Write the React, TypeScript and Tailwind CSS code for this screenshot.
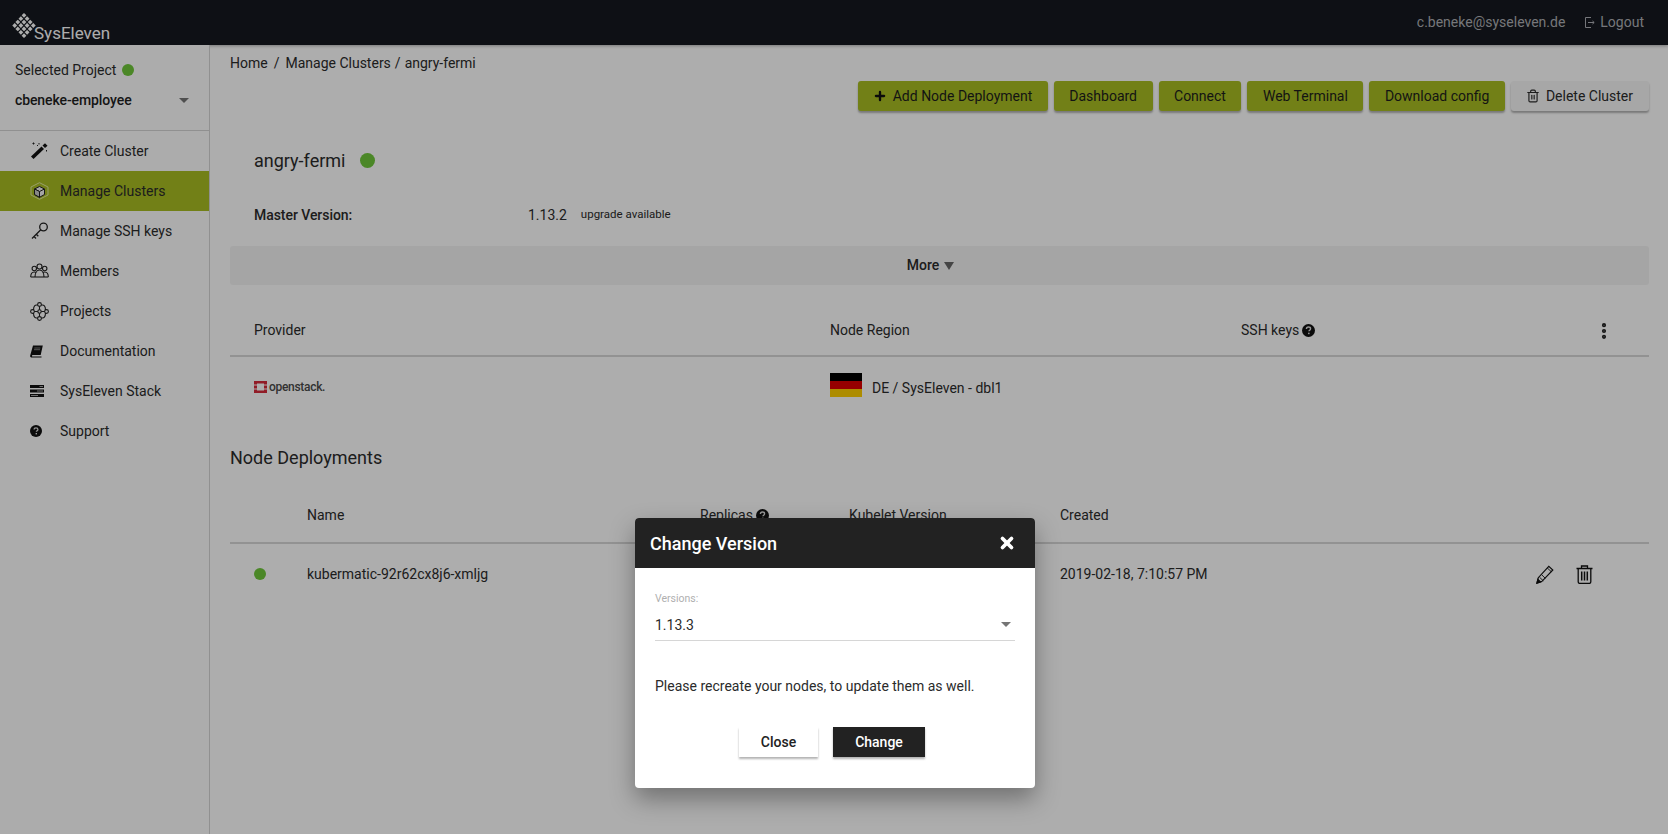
import React from "react";
import { Plus, Trash2, X, EllipsisVertical } from "lucide-react";

const Logo = () => {
  const cells: [number, number][] = [];
  for (let i = 0; i < 4; i++) for (let j = 0; j < 4; j++) cells.push([i, j]);
  return (
    <svg width="24" height="27" viewBox="0 0 24 27" className="shrink-0">
      {cells.map(([i, j]) => {
        const cx = 12 + (i - j) * 3.1;
        const cy = 13.5 + (i + j - 3) * 3.4;
        return <rect key={`${i}-${j}`} x={cx - 1.7} y={cy - 1.7} width="3.4" height="3.4" fill="#fff" transform={`rotate(45 ${cx} ${cy})`} />;
      })}
    </svg>
  );
};

const Wand = () => (
  <svg width="19" height="18" viewBox="0 0 19 18">
    <path d="M1 14.5 11.500 4.500l2.500 2.500L3.500 17z" fill="#111" />
    <path d="M12.500 3.500 15 1.200 17.500 3.700 15 6z" fill="#111" />
    <path d="M2.500 1.500h2M3.500.5v2M9 1v1.500M16.500 8v1.500M7 3.500h1" stroke="#222" strokeWidth="1" />
  </svg>
);
const Cube = () => (
  <svg width="19" height="18" viewBox="0 0 19 18" fill="none" strokeWidth="1">
    <path d="M9.500.7l8.500 4.300v8L9.500 17.300 1 13V5z" stroke="#e2ec9c" />
    <path d="M9.500 4.500l5 2.500v5.500l-5 2.800-5-2.800V7z" fill="#f4f4f4" stroke="#222" />
    <path d="M4.500 7l5 2.500 5-2.500M9.500 9.500v5.800" stroke="#222" />
    <path d="M4.500 7l5 2.500v5.800l-5-2.800z" fill="#c9c9c9" stroke="#222" />
  </svg>
);
const Key = () => (
  <svg width="19" height="18" viewBox="0 0 19 18" fill="none" stroke="#222" strokeWidth="1.300">
    <circle cx="13.500" cy="5" r="3.800" />
    <path d="M10.800 7.800 2 16.500M4 14.500l2 2M6.300 12.200l2 2" />
  </svg>
);
const People = () => (
  <svg width="19" height="18" viewBox="0 0 19 18" fill="none" stroke="#222" strokeWidth="1.100">
    <circle cx="9.500" cy="4.500" r="2.500" />
    <circle cx="4.300" cy="6.500" r="2.200" />
    <circle cx="14.700" cy="6.500" r="2.200" />
    <path d="M.7 15c0-3.200 1.200-5 3.600-5 1 0 1.800.3 2.300.9M18.300 15c0-3.200-1.200-5-3.600-5-1 0-1.800.3-2.300.9M5 15c0-4 1.800-7 4.500-7s4.500 3 4.500 7" />
    <path d="M.7 15h17.600" />
  </svg>
);
const Nodes = () => (
  <svg width="19" height="19" viewBox="0 0 19 19" fill="none" stroke="#222" strokeWidth="1.100">
    <circle cx="9.500" cy="2.500" r="1.900" />
    <circle cx="9.500" cy="16.500" r="1.900" />
    <circle cx="2.500" cy="9.500" r="1.900" />
    <circle cx="16.500" cy="9.500" r="1.900" />
    <circle cx="9.500" cy="9.500" r="1.700" />
    <path d="M9.500 4.400v3.400M9.500 11.200v3.400M4.400 9.500h3.400M11.200 9.500h3.400" />
    <path d="M7.700 3.200C5 2.500 3.500 4.200 3.500 7.900M11.300 3.200c2.700-.7 4.200 1 4.200 4.700M7.700 15.800c-2.700.7-4.200-1-4.200-4.700M11.300 15.800c2.700.7 4.200-1 4.200-4.700" />
  </svg>
);
const Book = () => (
  <svg width="13" height="13" viewBox="0 0 13 13" fill="#111">
    <path d="M3 .5h9.800L10.700 10H2.800c-.9 0-1.100 1-.6 1.400h9.300v1.100H1.300C.4 12.500-.1 11.500.2 10.500z" />
    <path d="M4.300 3h6M4 4.700h6" stroke="#aaa" strokeWidth=".7" />
  </svg>
);
const Stack = () => (
  <svg width="14" height="12" viewBox="0 0 14 12" fill="#111">
    <path d="M0 0h14v3H0zM0 4.500h14v3H0zM0 9h14v3H0z" />
    <path d="M9.500 1.500h3.500M7 6h6M1 10.500h7" stroke="#c8c8c8" strokeWidth=".8" />
  </svg>
);
const Help = ({ s = 12 }: { s?: number }) => (
  <svg width={s} height={s} viewBox="0 0 12 12">
    <circle cx="6" cy="6" r="6" fill="#111" />
    <path d="M4.100 4.600c0-1.200.9-1.800 1.900-1.800s1.900.6 1.900 1.600c0 1.300-1.500 1.300-1.500 2.400" fill="none" stroke="#ddd" strokeWidth="1.300" />
    <rect x="5.600" y="8" width="1.400" height="1.400" fill="#ddd" />
  </svg>
);
const PencilIcon = () => (
  <svg width="18" height="19" viewBox="0 0 18 19" fill="none" stroke="#111" strokeWidth="1.200">
    <path d="M1 18l1.300-5.300L12.800 1.300l4 3.700L6 16.300z" />
    <path d="M3.600 12.300l3.700 3.500M5.700 9.800l3.600 3.500M11.300 3l3.900 3.600" strokeWidth="0.900" />
    <path d="M1 18l.9-3.600 2.700 2.500z" fill="#111" />
  </svg>
);
const TrashIcon = () => (
  <svg width="17" height="19" viewBox="0 0 17 19" fill="none" stroke="#111" strokeWidth="1.300">
    <path d="M.5 3.500h16M5.500 3.500V1h6v2.500" />
    <path d="M2.200 3.500v13.300c0 1 .6 1.600 1.500 1.600h9.600c.9 0 1.500-.6 1.500-1.600V3.500" />
    <path d="M5.700 6.500v9M8.500 6.500v9M11.300 6.500v9" strokeWidth="1.500" />
  </svg>
);

const NAV: { label: string; icon: React.ReactNode; active?: boolean }[] = [
  { label: "Create Cluster", icon: <Wand /> },
  { label: "Manage Clusters", icon: <Cube />, active: true },
  { label: "Manage SSH keys", icon: <Key /> },
  { label: "Members", icon: <People /> },
  { label: "Projects", icon: <Nodes /> },
  { label: "Documentation", icon: <Book /> },
  { label: "SysEleven Stack", icon: <Stack /> },
  { label: "Support", icon: <Help /> },
];

const GreenBtn = ({ children }: { children: React.ReactNode }) => (
  <button className="h-[30px] px-[15.5px] rounded-[3px] bg-[#a8bd22] text-[14px] text-[#1d1d1d] flex items-center shadow-[0_2px_2px_rgba(0,0,0,0.3)] whitespace-nowrap">
    {children}
  </button>
);

export default function App() {
  return (
    <div className="relative h-[834px] w-[1668px] overflow-hidden bg-white font-['Roboto',sans-serif] text-[14px] text-[#2b2b2b]">
      <header className="h-[45px] bg-[#16191f] flex justify-between pr-[24px] shadow-[0_1px_3px_rgba(0,0,0,0.3)]">
        <div className="flex items-start pl-[12px] pt-[12px]">
          <Logo />
          <span className="text-white text-[17px] leading-[20px] ml-[-2px] mt-[11px]">SysEleven</span>
        </div>
        <div className="flex items-center gap-[20px] text-[14px] text-[#aeb0b5]">
          <span>c.beneke@syseleven.de</span>
          <span className="flex items-center gap-[5px]">
            <svg width="10" height="11" viewBox="0 0 10 11" fill="none" stroke="#aeb0b5" strokeWidth="1">
              <path d="M6 .5H.5v10H6M3 5.500h6M7.500 4l1.700 1.500L7.500 7" />
            </svg>
            Logout
          </span>
        </div>
      </header>

      <div className="flex h-[789px]">
        <aside className="w-[210px] shrink-0 bg-[#fefefe] border-r border-[#d4d4d4] flex flex-col">
          <div className="h-[86px] border-b border-[#d4d4d4] px-[15px] pt-[17px]">
            <div className="flex items-center gap-[6px] h-[16px] text-[14px]">
              Selected Project
              <span className="w-[12px] h-[12px] rounded-full bg-[#6fc73a]" />
            </div>
            <div className="flex items-center justify-between mt-[12px] pr-[5px] font-medium text-[14px] tracking-[-0.1px] text-[#1f1f1f]">
              cbeneke-employee
              <span className="w-0 h-0 border-l-[5px] border-r-[5px] border-t-[5px] border-l-transparent border-r-transparent border-t-[#757575]" />
            </div>
          </div>
          <nav>
            {NAV.map((n) => (
              <div key={n.label} className={`h-[40px] flex items-center ${n.active ? "bg-[#a8bd22]" : ""}`}>
                <span className="w-[60px] pl-[30px] flex items-center shrink-0">{n.icon}</span>
                {n.label}
              </div>
            ))}
          </nav>
        </aside>

        <main className="flex-1 pl-[20px] pr-[19px] min-w-0">
          <div className="h-[36px] flex items-center">
            <span>Home</span>
            <span className="ml-[6px]">/</span>
            <span className="ml-[6px]">Manage Clusters</span>
            <span className="ml-[4px]">/</span>
            <span className="ml-[4px]">angry-fermi</span>
          </div>
          <div className="flex justify-end gap-[6px]">
            <GreenBtn><Plus size={14} strokeWidth={4} className="mr-[6px] ml-[-1px] text-[#111]" />Add Node Deployment</GreenBtn>
            <GreenBtn>Dashboard</GreenBtn>
            <GreenBtn>Connect</GreenBtn>
            <GreenBtn>Web Terminal</GreenBtn>
            <GreenBtn>Download config</GreenBtn>
            <button className="h-[30px] pl-[15px] pr-[16px] rounded-[3px] bg-[#f7f7f7] flex items-center shadow-[0_2px_2px_rgba(0,0,0,0.3)]">
              <Trash2 size={14} className="mr-[6px]" />Delete Cluster
            </button>
          </div>

          <div className="pl-[24px] mt-[34px] flex items-center gap-[15px] h-[30px] text-[18px]">
            angry-fermi
            <span className="w-[15px] h-[15px] rounded-full bg-[#6fc73a]" />
          </div>
          <div className="pl-[24px] mt-[28px] flex items-center h-[24px]">
            <span className="w-[274px] font-medium tracking-[-0.05px]">Master Version:</span>
            <span>1.13.2</span>
            <span className="ml-[14px] text-[11.5px]">upgrade available</span>
          </div>
          <div className="mt-[19px] h-[39px] rounded-[3px] bg-[#f4f4f4] flex items-center justify-center gap-[5px] font-medium pr-[18px]">
            More
            <span className="w-0 h-0 border-l-[5px] border-r-[5px] border-t-[8px] border-l-transparent border-r-transparent border-t-[#666]" />
          </div>

          <div className="mt-[24px] h-[48px] flex items-center border-b-2 border-[#d8d8d8] pl-[24px] pb-[3px]">
            <span className="w-[576px]">Provider</span>
            <span className="w-[411px]">Node Region</span>
            <span className="flex items-center gap-[3px]">SSH keys <Help s={13} /></span>
            <EllipsisVertical size={20} strokeWidth={3} className="ml-auto mr-[35px] text-[#222]" />
          </div>
          <div className="h-[62px] flex items-center pl-[24px]">
            <div className="w-[576px] flex items-center gap-[2px] mt-[-2px]">
              <svg width="13" height="12" viewBox="0 0 13 12">
                <path d="M0 0h13v12H0z" fill="#d62a3a" />
                <rect x="3" y="2.500" width="7" height="7" fill="#fff" />
                <path d="M0 4h3M0 8h3M10 4h3M10 8h3" stroke="#fff" />
              </svg>
              <span className="text-[12px] tracking-[-0.3px] text-[#4a4a4a] font-medium">openstack.</span>
            </div>
            <div className="flex items-center gap-[10px]">
              <div className="w-[32px] h-[24px] mt-[-6px] flex flex-col">
                <span className="h-[8px] bg-black" />
                <span className="h-[8px] bg-[#dd0000]" />
                <span className="h-[8px] bg-[#ffce00]" />
              </div>
              DE / SysEleven - dbl1
            </div>
          </div>

          <div className="mt-[26px] h-[24px] flex items-center text-[18px]">Node Deployments</div>
          <div className="mt-[20px] h-[55px] flex items-center border-b-2 border-[#d8d8d8]">
            <span className="pl-[77px] w-[470px]">Name</span>
            <span className="w-[149px] flex items-center gap-[3px]">Replicas <Help s={13} /></span>
            <span className="w-[211px]">Kubelet Version</span>
            <span>Created</span>
          </div>
          <div className="h-[60px] flex items-center">
            <span className="ml-[24px] w-[12px] h-[12px] rounded-full bg-[#6fc73a]" />
            <span className="ml-[41px] w-[393px]">kubermatic-92r62cx8j6-xmljg</span>
            <span className="w-[360px]" />
            <span>2019-02-18, 7:10:57 PM</span>
            <span className="ml-auto mr-[56px] flex items-center gap-[22px]">
              <PencilIcon />
              <TrashIcon />
            </span>
          </div>
        </main>
      </div>

      <div className="absolute inset-0 bg-black/32" />
      <div className="absolute left-[635px] top-[518px] w-[400px] h-[270px] rounded-[4px] overflow-hidden bg-white shadow-[0_11px_25px_rgba(0,0,0,0.35)] flex flex-col">
        <div className="h-[50px] shrink-0 bg-[#222] text-white flex items-center justify-between pl-[15px] pr-[19px]">
          <span className="text-[18px] font-medium">Change Version</span>
          <X size={18} strokeWidth={5} />
        </div>
        <div className="px-[20px] pt-[25px]">
          <div className="text-[10.500px] leading-[12px] text-[#b0b0b0]">Versions:</div>
          <div className="mt-[6px] h-[30px] pt-[4px] border-b border-[#d6d6d6] flex items-start justify-between pr-[4px] text-[14px] text-[#2b2b2b] leading-[20px]">
            1.13.3
            <span className="mt-[7px] w-0 h-0 border-l-[5px] border-r-[5px] border-t-[5px] border-l-transparent border-r-transparent border-t-[#757575]" />
          </div>
          <div className="mt-[35px] text-[14px] leading-[20px] text-[#2b2b2b]">Please recreate your nodes, to update them as well.</div>
          <div className="mt-[31px] flex justify-center gap-[15px] pr-[6px]">
            <button className="w-[79px] h-[30px] bg-white font-medium text-[14px] text-[#222] shadow-[0_2px_2px_rgba(0,0,0,0.3)]">Close</button>
            <button className="w-[92px] h-[30px] bg-[#222] font-medium text-[14px] text-white shadow-[0_2px_2px_rgba(0,0,0,0.3)]">Change</button>
          </div>
        </div>
      </div>
    </div>
  );
}
